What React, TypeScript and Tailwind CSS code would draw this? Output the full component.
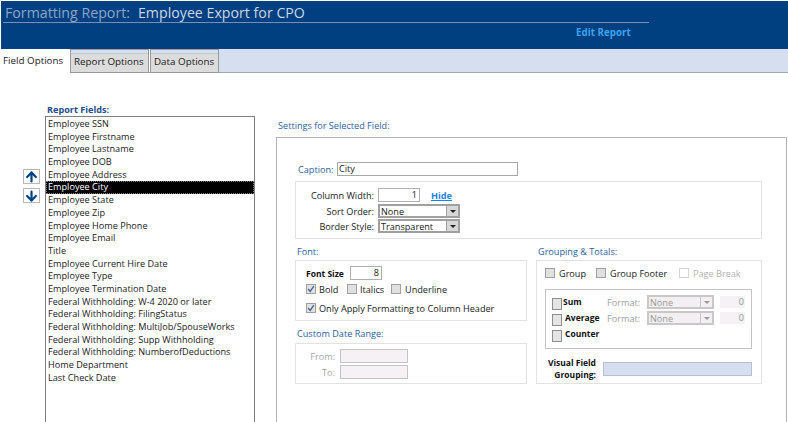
import { ArrowDown, ArrowUp } from 'lucide-react';

const fields = [
  'Employee SSN',
  'Employee Firstname',
  'Employee Lastname',
  'Employee DOB',
  'Employee Address',
  'Employee City',
  'Employee State',
  'Employee Zip',
  'Employee Home Phone',
  'Employee Email',
  'Title',
  'Employee Current Hire Date',
  'Employee Type',
  'Employee Termination Date',
  'Federal Withholding: W-4 2020 or later',
  'Federal Withholding: FilingStatus',
  'Federal Withholding: MultiJob/SpouseWorks',
  'Federal Withholding: Supp Withholding',
  'Federal Withholding: NumberofDeductions',
  'Home Department',
  'Last Check Date',
];

function Check({ checked, disabled }: { checked?: boolean; disabled?: boolean }) {
  return (
    <span
      className={`flex h-[10px] w-[10px] shrink-0 items-center justify-center border ${
        disabled ? 'border-[#d4d4d4] bg-white' : 'border-[#a0a0a0] bg-[#e0e0e0]'
      }`}
    >
      {checked && (
        <svg viewBox="0 0 10 10" className="h-[8px] w-[8px]">
          <path d="M1.5 5 L4 8 L8.5 1.5" fill="none" stroke="#3c5f9c" strokeWidth="1.6" />
        </svg>
      )}
    </span>
  );
}

function Select({ value, disabled, width }: { value: string; disabled?: boolean; width: string }) {
  return (
    <div
      className={`flex h-[14px] items-center justify-between border-2 pl-[1px] ${width} ${
        disabled ? 'border-[#c8c8c8] bg-[#f3eff3] text-[#9a9a9a]' : 'border-[#a0a0a0] bg-white text-[#222]'
      }`}
    >
      <span>{value}</span>
      <span
        className={`flex h-full w-[12px] items-center justify-center border-l ${
          disabled ? 'border-[#c8c8c8] bg-[#f3eff3]' : 'border-[#a0a0a0] bg-[#d8d8d8]'
        }`}
      >
        <span
          className={`h-0 w-0 border-x-[3px] border-t-[3px] border-x-transparent ${
            disabled ? 'border-t-[#9a9a9a]' : 'border-t-[#222]'
          }`}
        />
      </span>
    </div>
  );
}

function TotalRow({ label, labelClass, format }: { label: string; labelClass: string; format?: boolean }) {
  return (
    <div className="flex h-[16px] items-center">
      <span className="flex h-[16px] w-[55px] items-start">
        <span className="mt-[4px] h-[12px] w-[10px] shrink-0 border border-[#8f8f8f] bg-[#e4e4e4]" />
        <span className={`text-[8.5px] leading-[16px] font-bold text-[#111] ${labelClass}`}>{label}</span>
      </span>
      {format && (
        <>
          <span className="w-[40px] text-[#a0a0a0]">Format:</span>
          <Select value="None" disabled width="w-[67px]" />
          <span className="ml-[6px] h-[12px] w-[25px] bg-[#f5f1f5] pr-[1px] text-right leading-[12px] text-[#999]">0</span>
        </>
      )}
    </div>
  );
}

function Tab({ label, width }: { label: string; width: string }) {
  return (
    <div className={`mb-[-1px] border border-[#9a9a9a] bg-[#d6dff0] pt-[3px] ${width}`}>
      <div className="h-full border-t border-[#c4c8d0] bg-[#dcdcdc] pt-px pl-[3px] text-[9.8px]">{label}</div>
    </div>
  );
}

export default function App() {
  return (
    <div className="h-[422px] w-[788px] overflow-hidden bg-white pt-px font-['Open_Sans',sans-serif] text-[9.15px] leading-[13px] text-[#222]">
      <div className="ml-px h-[48px] bg-[#004080] pt-[3px]">
        <div className="ml-[2px] w-[646px] border-b border-[#6f8fb8] pb-px pl-[2px] text-[14.2px] leading-[17px]">
          <span className="text-[#8aa5c8]">Formatting Report:</span>
          <span className="ml-[8px] text-[#c9d6e6]">Employee Export for CPO</span>
        </div>
        <div className="mt-[3px] ml-[575px] text-[9.8px] font-bold text-[#3aa2ee]">Edit Report</div>
      </div>

      <div className="flex h-[24px] border-b border-[#a2a4ac] bg-[#d6dff0]">
        <div className="mb-[-1px] w-[70px] bg-white pt-[5px] pl-[3px] text-[9.8px]">Field Options</div>
        <Tab label="Report Options" width="w-[79px]" />
        <div className="w-px bg-white" />
        <Tab label="Data Options" width="w-[69px]" />
      </div>

      <div className="flex">
        <div className="mt-[96px] ml-[23px] flex w-[22px] flex-col gap-[4px]">
          <span className="flex h-[15px] w-[17px] items-center justify-center border border-[#b8b8b8] bg-white text-[#004080]">
            <ArrowUp size={16} strokeWidth={3.5} />
          </span>
          <span className="flex h-[15px] w-[17px] items-center justify-center border border-[#b8b8b8] bg-white text-[#004080]">
            <ArrowDown size={16} strokeWidth={3.5} />
          </span>
        </div>

        <div className="w-[231px]">
          <div className="mt-[30px] ml-[2px] font-bold text-[#1f4e8c]">Report Fields:</div>
          <div className="h-[320px] w-[210px] border border-[#808080] pt-px">
            {fields.map(name => (
              <div
                key={name}
                className={`h-[12.7px] pl-[2px] leading-[12.7px] ${
                  name === 'Employee City'
                    ? 'bg-black text-white outline outline-1 -outline-offset-1 outline-dotted outline-[#777]'
                    : 'text-[#222]'
                }`}
              >
                {name}
              </div>
            ))}
          </div>
        </div>

        <div className="w-[511px]">
          <div className="mt-[46px] ml-[2px] h-[18px] text-[#2f5f9e]">Settings for Selected Field:</div>
          <div className="h-[300px] border border-[#b4b4b4] pt-[24px] pl-[18px]">
            <div className="flex h-[14px] items-center">
              <span className="ml-[3px] w-[39px] text-[#2f5f9e]">Caption:</span>
              <div className="h-[14px] w-[181px] border border-[#a8a8a8] pl-[1px] leading-[12px]">City</div>
            </div>

            <div className="mt-[5px] h-[58px] w-[467px] border border-[#e2e2e2] pt-[6px]">
              <div className="flex h-[14px] items-center">
                <span className="w-[78px] text-right">Column Width:</span>
                <div className="ml-[4px] h-[14px] w-[42px] border border-[#b0b0b0] pr-[2px] text-right leading-[12px]">1</div>
                <span className="ml-[11px] font-bold text-[#1a84e8] underline">Hide</span>
              </div>
              <div className="mt-[2px] flex h-[14px] items-center">
                <span className="w-[78px] text-right">Sort Order:</span>
                <div className="ml-[4px]"><Select value="None" width="w-[82px]" /></div>
              </div>
              <div className="mt-[1px] flex h-[14px] items-center">
                <span className="w-[78px] text-right">Border Style:</span>
                <div className="ml-[4px]"><Select value="Transparent" width="w-[82px]" /></div>
              </div>
            </div>

            <div className="mt-[6px] flex gap-[9px]">
              <div className="w-[232px]">
                <div className="h-[15px] pl-[2px] text-[#2f5f9e]">Font:</div>
                <div className="h-[61px] border border-[#e2e2e2] pt-[5px] pl-[10px]">
                  <div className="flex h-[14px] items-center">
                    <span className="w-[44px] text-[8.5px] font-bold text-[#111]">Font Size</span>
                    <div className="h-[14px] w-[32px] border border-[#b0b0b0] pr-[2px] text-right leading-[12px]">8</div>
                  </div>
                  <div className="mt-[1px] flex h-[16px] items-center">
                    <Check checked />
                    <span className="ml-[3px] w-[28px]">Bold</span>
                    <Check />
                    <span className="ml-[3px] w-[31px]">Italics</span>
                    <Check />
                    <span className="ml-[4px]">Underline</span>
                  </div>
                  <div className="mt-[3px] flex h-[16px] items-center">
                    <Check checked />
                    <span className="ml-[3px]">Only Apply Formatting to Column Header</span>
                  </div>
                </div>
                <div className="mt-[6px] h-[16px] pl-[2px] text-[#2f5f9e]">Custom Date Range:</div>
                <div className="h-[41px] border border-[#e2e2e2] pt-[5px] text-[#a8a8a8]">
                  <div className="flex h-[14px] items-center">
                    <span className="w-[39px] text-right">From:</span>
                    <span className="ml-[5px] h-[14px] w-[68px] border border-[#c4c4c4] bg-[#f5f1f5]" />
                  </div>
                  <div className="mt-[2px] flex h-[14px] items-center">
                    <span className="w-[39px] text-right">To:</span>
                    <span className="ml-[5px] h-[14px] w-[68px] border border-[#c4c4c4] bg-[#f5f1f5]" />
                  </div>
                </div>
              </div>

              <div className="w-[226px]">
                <div className="h-[15px] pl-[2px] text-[#2f5f9e]">Grouping & Totals:</div>
                <div className="h-[124px] border border-[#e2e2e2] pt-[5px] pl-[8px]">
                  <div className="flex h-[14px] items-center">
                    <Check />
                    <span className="ml-[4px] w-[37px]">Group</span>
                    <Check />
                    <span className="ml-[4px] w-[69px]">Group Footer</span>
                    <Check disabled />
                    <span className="ml-[4px] text-[#b0b0b0]">Page Break</span>
                  </div>
                  <div className="mt-[9px] h-[60px] w-[207px] border border-[#c4c4c4] pt-[4px] pl-[6px]">
                    <TotalRow label="Sum" labelClass="ml-px" format />
                    <TotalRow label="Average" labelClass="ml-[3px]" format />
                    <TotalRow label="Counter" labelClass="ml-[3px]" />
                  </div>
                  <div className="mt-[8px] flex items-center">
                    <span className="w-[51px] text-right text-[8.5px] leading-[12px] font-bold text-[#111]">Visual Field Grouping:</span>
                    <span className="ml-[7px] h-[14px] w-[149px] border border-[#b8c0d0] bg-[#d6dff0]" />
                  </div>
                </div>
              </div>
            </div>
          </div>
        </div>
      </div>
    </div>
  );
}
